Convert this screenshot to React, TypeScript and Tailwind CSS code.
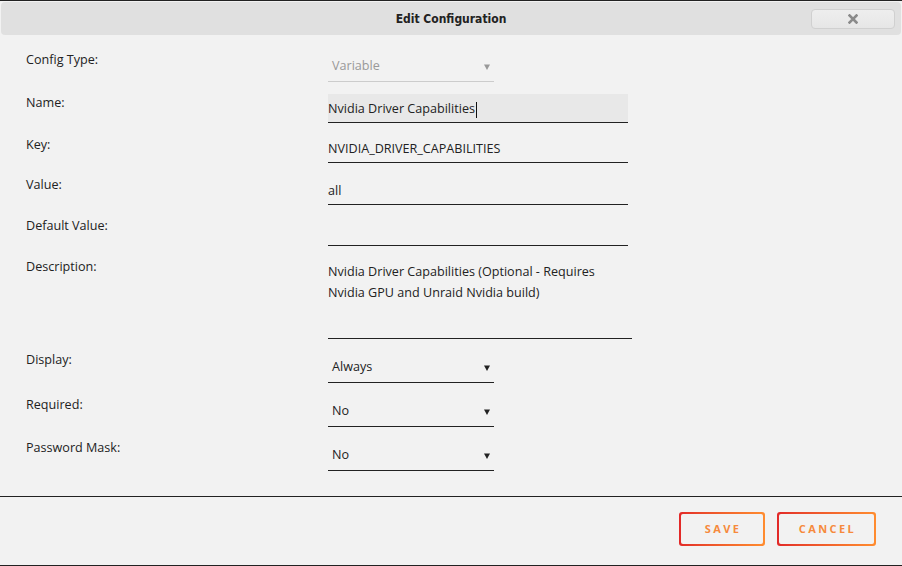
import React from "react";

const font = { fontFamily: '"Open Sans", "Noto Sans", sans-serif' };

const Label: React.FC<{ text: string; offset?: string }> = ({ text, offset = "" }) => (
  <div className={`w-[328px] shrink-0 pl-[26px] text-[12.6px] leading-[18px] text-[#222] ${offset}`}>{text}</div>
);

const TextInput: React.FC<{ value: string; focused?: boolean }> = ({ value, focused }) => (
  <div
    className={`flex h-[29px] w-[300px] items-center border-b border-[#222] pt-[3px] text-[12.6px] text-[#222] ${focused ? "bg-[#e8e8e8]" : ""}`}
  >
    <span>{value}</span>
    {focused && <span className="ml-[1px] h-[16px] w-px bg-[#111]" />}
  </div>
);

const Select: React.FC<{ value: string; disabled?: boolean; offset: string }> = ({ value, disabled, offset }) => (
  <div
    className={`${offset} flex h-[29px] w-[166px] items-center justify-between border-b pb-[1px] pl-[4px] pr-[4px] text-[12.6px] ${
      disabled ? "border-[#ccc] text-[#999]" : "border-[#222] text-[#222]"
    }`}
  >
    <span>{value}</span>
    <svg width="6" height="6" viewBox="0 0 6 6" className="mt-[1px]">
      <path d="M0 0.5 H6 L3 6 Z" fill={disabled ? "#999" : "#222"} />
    </svg>
  </div>
);

const GradientButton: React.FC<{ text: string; width: string }> = ({ text, width }) => (
  <div className={`${width} h-[34px] rounded-[3px] bg-gradient-to-r from-[#e22828] to-[#ff8c2f] p-[2px]`}>
    <div className="flex h-full w-full items-center justify-center rounded-[2px] bg-[#f2f2f2]">
      <span className="pl-[2px] text-[11px] font-bold tracking-[2.4px] text-[#f68a3c]">{text}</span>
    </div>
  </div>
);

export default function App() {
  return (
    <div className="flex h-[566px] w-[902px] flex-col border-t border-b border-[#222] bg-[#f2f2f2]" style={font}>
      {/* title bar */}
      <div className="relative mx-[1px] mt-[1px] flex h-[33px] items-center justify-center rounded-[4px] bg-[#e0e0e0]">
        <span
          className="text-[12px] font-bold text-[#222]"
          style={{ fontFamily: '"DejaVu Sans Condensed", "DejaVu Sans", sans-serif' }}
        >
          Edit Configuration
        </span>
        <div className="absolute right-[6px] top-[7px] flex h-[20px] w-[84px] items-center justify-center rounded-[4px] border border-[#d0d0d0] bg-gradient-to-b from-[#eeeeee] to-[#e6e6e6]">
          <svg width="10" height="10" viewBox="0 0 10 10">
            <path d="M1.5 1.5 L8.5 8.5 M8.5 1.5 L1.5 8.5" stroke="#8a8a8a" strokeWidth="2.6" strokeLinecap="square" />
          </svg>
        </div>
      </div>

      {/* form */}
      <div className="flex flex-col pt-[16px]">
        <div className="flex items-start">
          <Label text="Config Type:" />
          <Select value="Variable" disabled offset="mt-[2px]" />
        </div>
        <div className="mt-[12px] flex items-start">
          <Label text="Name:" />
          <TextInput value="Nvidia Driver Capabilities" focused />
        </div>
        <div className="mt-[11px] flex items-start">
          <Label text="Key:" offset="mt-[2px]" />
          <TextInput value="NVIDIA_DRIVER_CAPABILITIES" />
        </div>
        <div className="mt-[13px] flex items-start">
          <Label text="Value:" />
          <TextInput value="all" />
        </div>
        <div className="mt-[12px] flex items-start">
          <Label text="Default Value:" />
          <TextInput value="" />
        </div>
        <div className="mt-[12px] flex items-start">
          <Label text="Description:" />
          <div className="h-[81px] w-[304px] border-b border-[#222] pt-[3px] text-[12.6px] leading-[21px] text-[#222]">
            Nvidia Driver Capabilities (Optional - Requires
            <br />
            Nvidia GPU and Unraid Nvidia build)
          </div>
        </div>
        <div className="mt-[12px] flex items-start">
          <Label text="Display:" />
          <Select value="Always" offset="mt-[3px]" />
        </div>
        <div className="mt-[13px] flex items-start">
          <Label text="Required:" />
          <Select value="No" offset="mt-[2px]" />
        </div>
        <div className="mt-[12px] flex items-start">
          <Label text="Password Mask:" />
          <Select value="No" offset="mt-[3px]" />
        </div>
      </div>

      {/* footer */}
      <div className="mt-auto flex h-[69px] items-start justify-end gap-[12px] border-t border-[#222] pr-[26px] pt-[15px]">
        <GradientButton text="SAVE" width="w-[86px]" />
        <GradientButton text="CANCEL" width="w-[99px]" />
      </div>
    </div>
  );
}
